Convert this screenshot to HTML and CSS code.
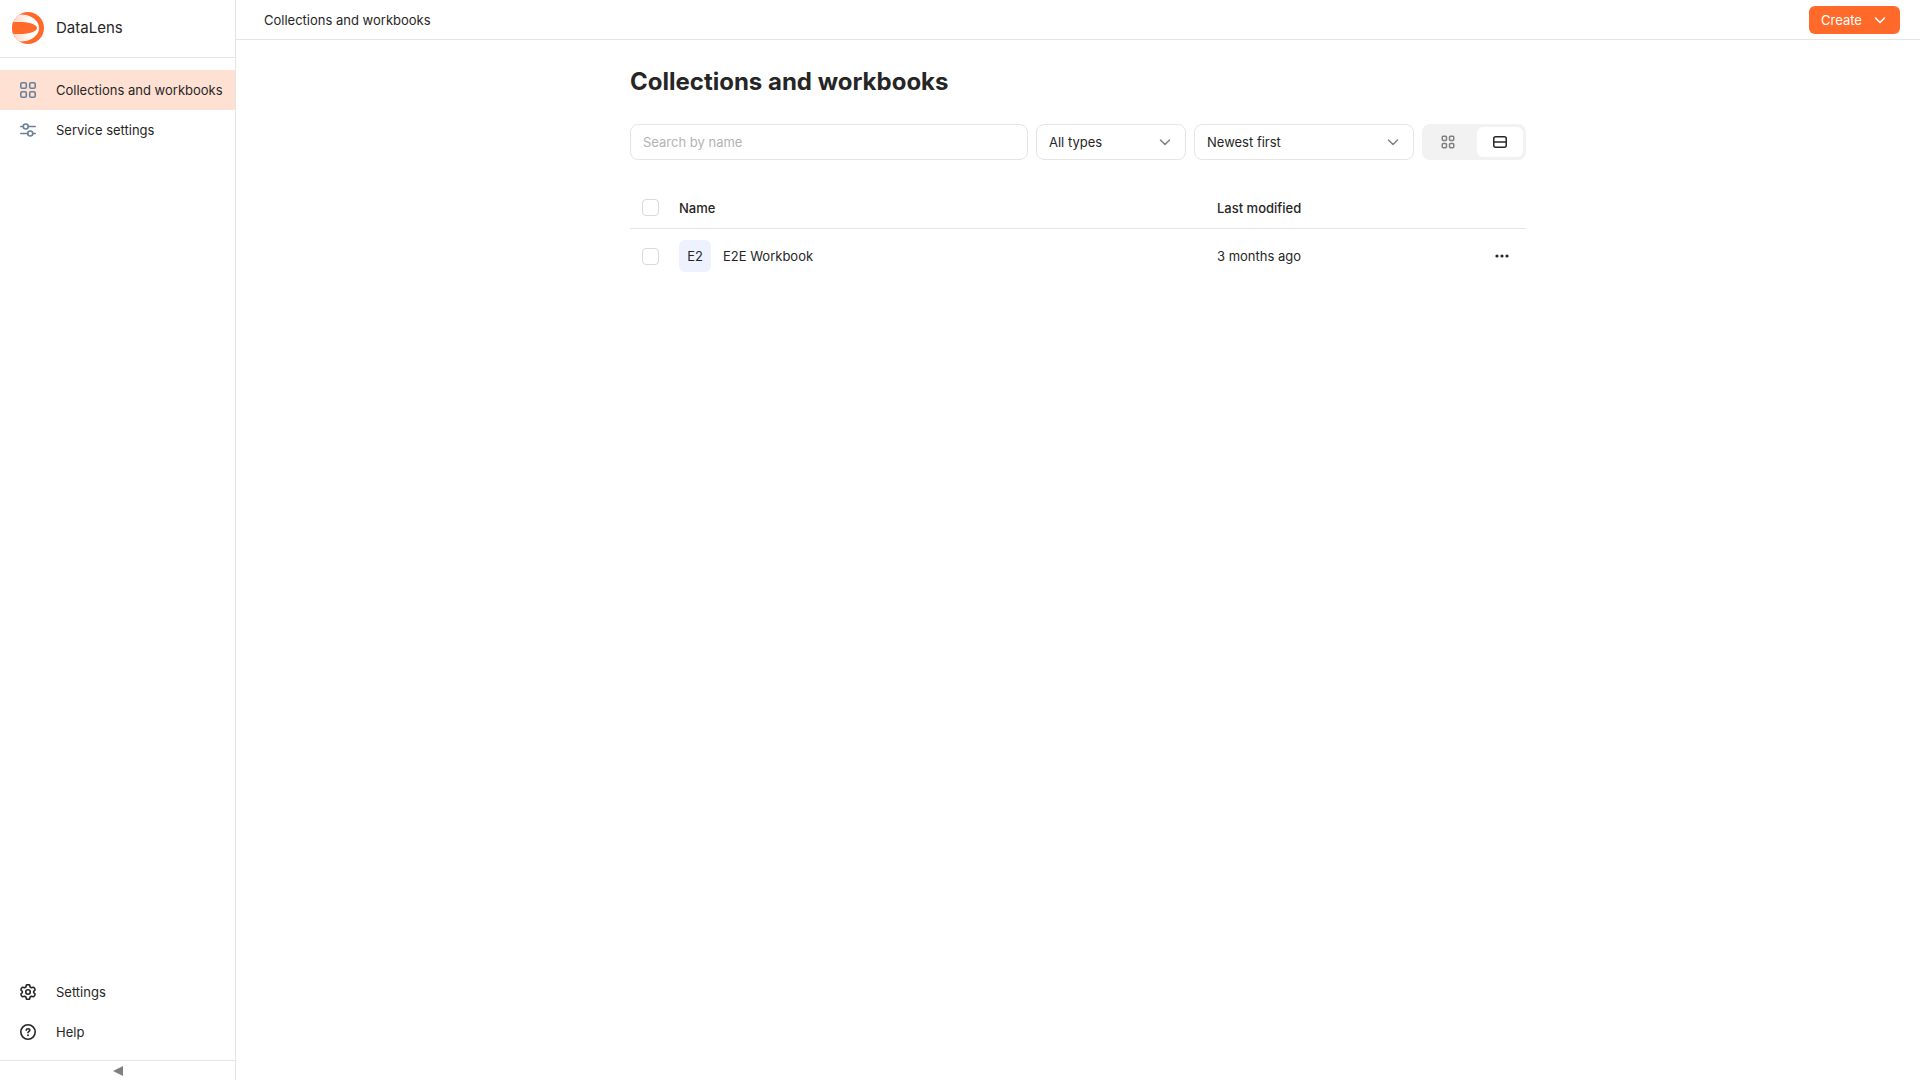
FILE: index.html
```html
<!DOCTYPE html>
<html lang="en">
<head>
<meta charset="utf-8">
<meta name="viewport" content="width=device-width, initial-scale=1">
<title>Collections and workbooks</title>
<link rel="stylesheet" href="styles.css">
</head>
<body>
<div class="app">
  <aside class="sidebar">
    <a class="brand" href="#">
      <svg class="brand-logo" viewBox="0 0 32 32" aria-hidden="true">
        <defs>
          <linearGradient id="lens" x1="0" x2="1"><stop offset="0.300" stop-color="#ffd9c8"/><stop offset="0.800" stop-color="#fff"/></linearGradient>
          <clipPath id="disc"><circle cx="16" cy="16" r="16"/></clipPath>
        </defs>
        <g clip-path="url(#disc)">
          <path fill="#ff6929" d="M0 0h32v32H0z"/>
          <ellipse fill="url(#lens)" cx="9" cy="16" rx="18" ry="13.500"/>
          <path fill="#ff6929" d="M-1 10.300C3 9.900 7 9.800 10 10c9 .4 15 3 15 6s-6 5.600-15 6c-3 .2-7 .1-11-.3z"/>
        </g>
      </svg>
      <span class="brand-name">DataLens</span>
    </a>
    <nav class="menu" aria-label="Main">
      <a class="menu-item menu-item-active" href="#">
        <svg class="menu-icon tinted" viewBox="0 0 16 16" aria-hidden="true"><g fill="none" stroke="currentColor" stroke-width="1.600"><rect x="0.800" y="0.800" width="5.500" height="5.500" rx="1.300"/><rect x="9.700" y="0.800" width="5.500" height="5.500" rx="1.300"/><rect x="0.800" y="9.700" width="5.500" height="5.500" rx="1.300"/><rect x="9.700" y="9.700" width="5.500" height="5.500" rx="1.300"/></g></svg>
        Collections and workbooks
      </a>
      <a class="menu-item" href="#">
        <svg class="menu-icon tinted" viewBox="0 0 16 16" aria-hidden="true"><g fill="none" stroke="currentColor" stroke-width="1.600" stroke-linecap="round"><path d="M.75 4.500h2.500M8.250 4.500h7M.75 11.500h7M12.750 11.500h2.500"/><circle cx="5.750" cy="4.500" r="2.500"/><circle cx="10.250" cy="11.500" r="2.500"/></g></svg>
        Service settings
      </a>
    </nav>
    <nav class="menu menu-bottom" aria-label="Account">
      <a class="menu-item" href="#">
        <svg class="menu-icon" viewBox="0 0 16 16" aria-hidden="true"><g fill="none" stroke="currentColor" stroke-width="1.600" stroke-linejoin="round"><path d="M6.400 1Q8 .3 9.600 1L10.100 3L11.400 3.700L13.400 3.200Q15.100 4.300 15.100 6L13.700 7.300V8.700L15.100 10Q15.100 11.700 13.400 12.800L11.400 12.300L10.100 13L9.600 15Q8 15.700 6.400 15L5.900 13L4.600 12.300L2.600 12.800Q.9 11.700 .9 10L2.300 8.700V7.300L.9 6Q.9 4.300 2.600 3.200L4.600 3.700L5.900 3Z"/><circle cx="8" cy="8" r="2.250"/></g></svg>
        Settings
      </a>
      <a class="menu-item" href="#">
        <svg class="menu-icon" viewBox="0 0 16 16" aria-hidden="true"><g fill="none" stroke="currentColor" stroke-width="1.600" stroke-linecap="round" stroke-linejoin="round"><circle cx="8" cy="8" r="7.200"/><path d="M6.200 6.200C6.300 5.200 7 4.700 8 4.700s1.800.6 1.800 1.500C9.800 7.500 8 7.400 8 8.800"/></g><circle cx="8" cy="11.200" r="0.950" fill="currentColor"/></svg>
        Help
      </a>
    </nav>
    <button class="collapse" type="button" aria-label="Collapse sidebar">
      <svg class="collapse-icon" viewBox="0 0 10 10" aria-hidden="true"><path fill="currentColor" d="M0 5 10 0v10z"/></svg>
    </button>
  </aside>

  <div class="page">
    <header class="topbar">
      <a class="crumb" href="#">Collections and workbooks</a>
      <button class="create" type="button">Create
        <svg class="icon" viewBox="0 0 16 16" aria-hidden="true"><path d="m3.500 6 4.500 4.500L12.500 6" fill="none" stroke="currentColor" stroke-width="1.500" stroke-linecap="round" stroke-linejoin="round"/></svg>
      </button>
    </header>

    <main class="content">
      <h1 class="title">Collections and workbooks</h1>

      <div class="filters">
        <input class="field search" type="text" placeholder="Search by name" aria-label="Search by name">
        <div class="picker picker-types">
          <select class="field" aria-label="Type"><option>All types</option></select>
          <svg class="icon picker-arrow" viewBox="0 0 16 16" aria-hidden="true"><path d="m3.500 6 4.500 4.500L12.500 6" fill="none" stroke="currentColor" stroke-width="1.500" stroke-linecap="round" stroke-linejoin="round"/></svg>
        </div>
        <div class="picker picker-sort">
          <select class="field" aria-label="Sort order"><option>Newest first</option></select>
          <svg class="icon picker-arrow" viewBox="0 0 16 16" aria-hidden="true"><path d="m3.500 6 4.500 4.500L12.500 6" fill="none" stroke="currentColor" stroke-width="1.500" stroke-linecap="round" stroke-linejoin="round"/></svg>
        </div>
        <div class="view-switch" role="group" aria-label="View">
          <button class="view" type="button" aria-label="Grid" aria-pressed="false">
            <svg class="icon" viewBox="0 0 16 16" aria-hidden="true"><g fill="none" stroke="currentColor" stroke-width="1.500"><rect x="2.250" y="2.250" width="4.250" height="4.250" rx="1"/><rect x="9.500" y="2.250" width="4.250" height="4.250" rx="1"/><rect x="2.250" y="9.500" width="4.250" height="4.250" rx="1"/><rect x="9.500" y="9.500" width="4.250" height="4.250" rx="1"/></g></svg>
          </button>
          <button class="view view-active" type="button" aria-label="Table" aria-pressed="true">
            <svg class="icon" viewBox="0 0 16 16" aria-hidden="true"><g fill="none" stroke="currentColor" stroke-width="1.500"><rect x="1.750" y="2.750" width="12.500" height="10.500" rx="2"/><path d="M2 8h12"/></g></svg>
          </button>
        </div>
      </div>

      <table class="list">
        <thead>
          <tr>
            <th class="col-check"><input class="check" type="checkbox" aria-label="Select all"></th>
            <th class="col-name">Name</th>
            <th class="col-date">Last modified</th>
            <th class="col-menu"></th>
          </tr>
        </thead>
        <tbody>
          <tr>
            <td class="col-check"><input class="check" type="checkbox" aria-label="Select E2E Workbook"></td>
            <td class="col-name"><a class="entry" href="#"><span class="badge">E2</span>E2E Workbook</a></td>
            <td class="col-date">3 months ago</td>
            <td class="col-menu"><button class="more" type="button" aria-label="Actions"><svg class="icon" viewBox="0 0 16 16" aria-hidden="true"><g fill="currentColor"><circle cx="3" cy="8" r="1.600"/><circle cx="8" cy="8" r="1.600"/><circle cx="13" cy="8" r="1.600"/></g></svg></button></td>
          </tr>
        </tbody>
      </table>
    </main>
  </div>
</div>
</body>
</html>
```
FILE: styles.css
```css
* { box-sizing: border-box; }

body {
  margin: 0;
  font: 13px/18px Inter, "Liberation Sans", sans-serif;
  color: #262626;
  background: #fff;
}

a { color: inherit; text-decoration: none; }

button, input, select { font: inherit; color: inherit; margin: 0; }

button { border: 0; padding: 0; background: none; cursor: pointer; }

.icon { display: block; flex: none; width: 16px; height: 16px; }

.app { display: flex; min-height: 100vh; }

/* Sidebar */
.sidebar {
  display: flex;
  flex-direction: column;
  flex: none;
  width: 236px;
  border-right: 1px solid #e5e5e5;
}

.brand {
  display: flex;
  align-items: center;
  gap: 12px;
  height: 58px;
  padding: 0 12px 2px;
  border-bottom: 1px solid #e5e5e5;
}

.brand-logo { width: 32px; height: 32px; }

.brand-name { font-size: 15px; line-height: 20px; }

.menu { padding-top: 12px; }

.menu-item {
  display: flex;
  align-items: center;
  gap: 20px;
  height: 40px;
  padding-left: 20px;
  white-space: nowrap;
}

.menu-item-active { background: #ffe1d4; }

.menu-icon { flex: none; width: 16px; height: 16px; }

.tinted { color: #6b8099; }

.menu-bottom { margin-top: auto; padding-bottom: 8px; }

.collapse {
  display: flex;
  align-items: center;
  justify-content: center;
  height: 20px;
  border-top: 1px solid #e5e5e5;
  color: #808080;
}

.collapse-icon { width: 10px; height: 10px; }

/* Page */
.page { flex: 1; min-width: 0; }

.topbar {
  display: flex;
  align-items: center;
  justify-content: space-between;
  height: 40px;
  padding: 0 20px 0 28px;
  border-bottom: 1px solid #e5e5e5;
}

.create {
  display: flex;
  align-items: center;
  justify-content: space-between;
  min-width: 91px;
  height: 28px;
  padding: 0 12px;
  border-radius: 6px;
  background: #ff6929;
  color: #fff;
}

.content { max-width: 936px; margin: 0 auto; padding: 24px 20px; }

.title { margin: 0 0 24px; font-size: 24px; line-height: 36px; font-weight: 700; }

.filters { display: flex; gap: 8px; }

.field {
  width: 100%;
  height: 36px;
  padding: 0 12px;
  border: 1px solid #e5e5e5;
  border-radius: 8px;
  background: #fff;
  appearance: none;
}

.search { flex: 1; min-width: 0; }

.search::placeholder { color: #b3b3b3; opacity: 1; }

.picker { display: grid; align-items: center; flex: none; }

.picker > * { grid-area: 1 / 1; }

.picker-types { width: 150px; }

.picker-sort { width: 220px; }

.picker-arrow { justify-self: end; margin-right: 13px; color: #808080; pointer-events: none; }

.view-switch {
  display: grid;
  grid-template-columns: 1fr 1fr;
  gap: 6px;
  flex: none;
  width: 104px;
  height: 36px;
  padding: 3px;
  border-radius: 8px;
  background: #f2f2f2;
}

.view { display: flex; align-items: center; justify-content: center; border-radius: 6px; color: #808080; }

.view-active { background: #fff; color: #262626; }

/* Entries */
.list { width: 100%; margin-top: 24px; border-spacing: 0; table-layout: fixed; text-align: left; }

.list th { height: 45px; padding: 3px 0 0; border-bottom: 1px solid #e5e5e5; font-weight: 500; }

.list td { height: 54px; padding: 0; }

.list .col-check { width: 49px; padding-left: 12px; }

.list .col-date { width: 260px; }

.list .col-menu { width: 49px; }

.check {
  display: block;
  width: 17px;
  height: 17px;
  border: 1px solid #d9d9d9;
  border-radius: 4px;
  background: #fff;
  appearance: none;
}

.entry { display: flex; align-items: center; gap: 12px; }

.badge {
  width: 32px;
  height: 32px;
  border-radius: 6px;
  background: #eef2ff;
  line-height: 32px;
  text-align: center;
}

.more { display: flex; align-items: center; justify-content: center; width: 28px; height: 28px; margin-left: 11px; }
```
